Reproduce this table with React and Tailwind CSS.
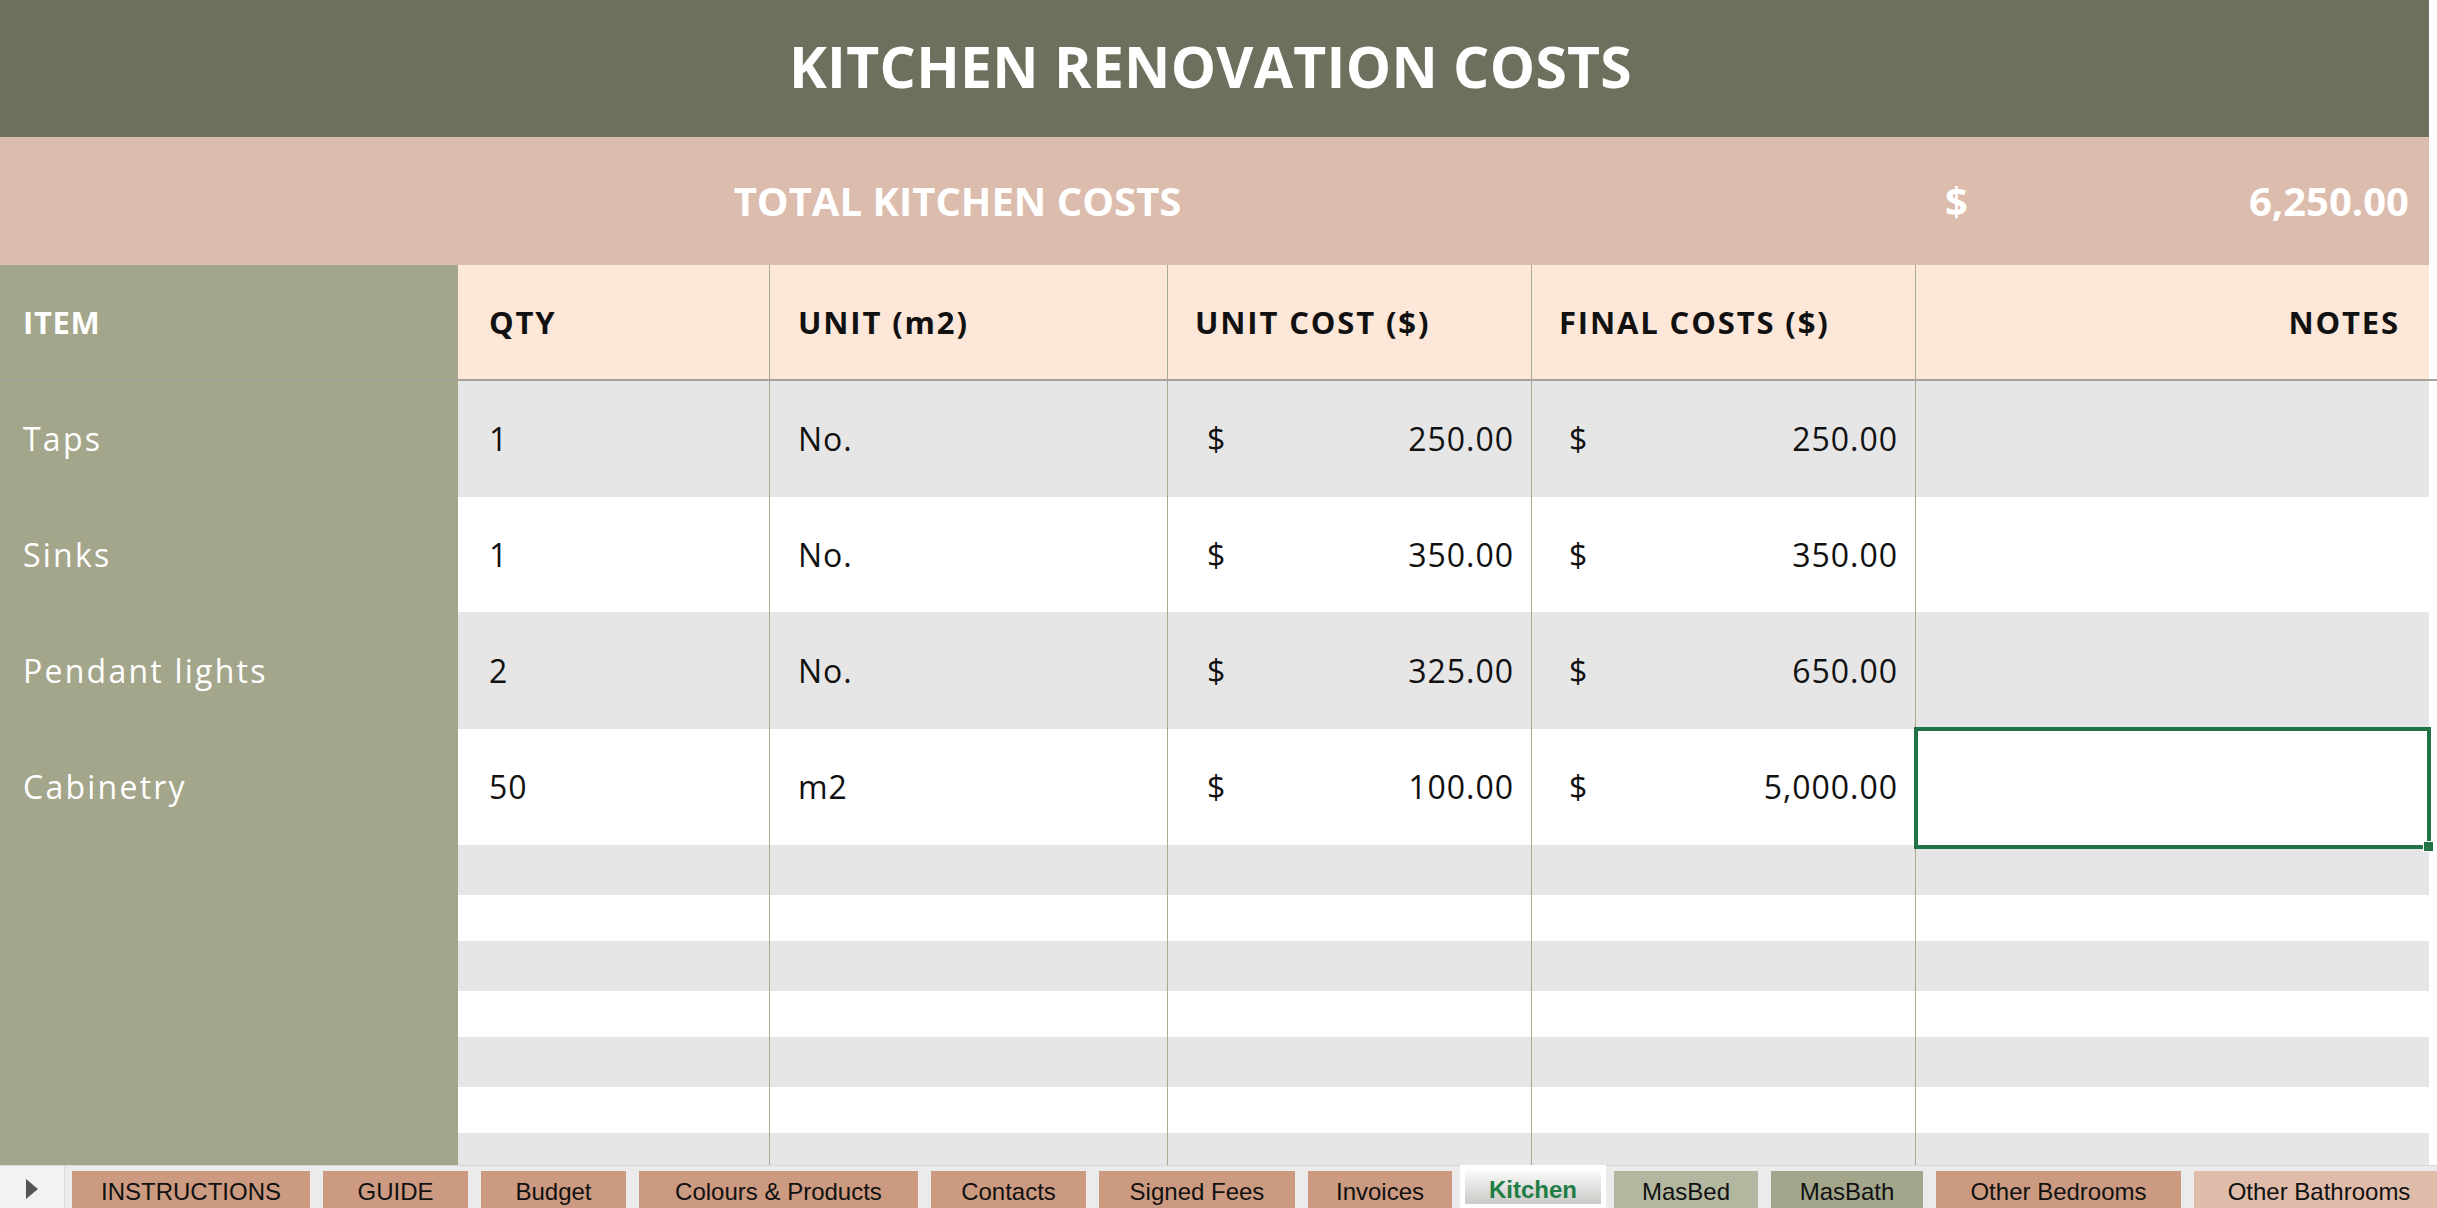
const sans = "font-['Open_Sans',sans-serif]";
const tabFont = "font-['Liberation_Sans',Arial,sans-serif]";

const dataRows = [
  { h: 'h-[116px]', bg: 'bg-[#e7e6e7]', item: 'Taps', qty: '1', unit: 'No.', cost: '250.00', fin: '250.00' },
  { h: 'h-[115px]', bg: 'bg-white', item: 'Sinks', qty: '1', unit: 'No.', cost: '350.00', fin: '350.00' },
  { h: 'h-[117px]', bg: 'bg-[#e7e6e7]', item: 'Pendant lights', qty: '2', unit: 'No.', cost: '325.00', fin: '650.00' },
  { h: 'h-[116px]', bg: 'bg-white', item: 'Cabinetry', qty: '50', unit: 'm2', cost: '100.00', fin: '5,000.00', selected: true },
];

const emptyRows = [
  { h: 'h-[50px]', bg: 'bg-[#e7e6e7]' },
  { h: 'h-[46px]', bg: 'bg-white' },
  { h: 'h-[50px]', bg: 'bg-[#e7e6e7]' },
  { h: 'h-[46px]', bg: 'bg-white' },
  { h: 'h-[50px]', bg: 'bg-[#e7e6e7]' },
  { h: 'h-[46px]', bg: 'bg-white' },
  { h: 'h-[32px]', bg: 'bg-[#e7e6e7]' },
];

const tabs = [
  { name: 'INSTRUCTIONS', w: 'w-[238px]', bg: 'bg-[#cc9a80]' },
  { name: 'GUIDE', w: 'w-[145px]', bg: 'bg-[#cc9a80]' },
  { name: 'Budget', w: 'w-[145px]', bg: 'bg-[#cc9a80]' },
  { name: 'Colours & Products', w: 'w-[279px]', bg: 'bg-[#cc9a80]' },
  { name: 'Contacts', w: 'w-[155px]', bg: 'bg-[#cc9a80]' },
  { name: 'Signed Fees', w: 'w-[196px]', bg: 'bg-[#cc9a80]' },
  { name: 'Invoices', w: 'w-[144px]', bg: 'bg-[#cc9a80]' },
  { name: 'Kitchen', w: 'w-[146px]', active: true },
  { name: 'MasBed', w: 'w-[144px]', bg: 'bg-[#b4b7a0]' },
  { name: 'MasBath', w: 'w-[152px]', bg: 'bg-[#a3a68b]' },
  { name: 'Other Bedrooms', w: 'w-[245px]', bg: 'bg-[#cc9a80]' },
  { name: 'Other Bathrooms', w: 'w-[250px]', bg: 'bg-[#dfbcaa]' },
];

function DataRow({ r }) {
  return (
    <div className={`flex ${r.h} shrink-0 text-[32px] tracking-[0.03em] text-[#111]`}>
      <div className="w-[458px] shrink-0 bg-[#a4a68b] pl-[23px] flex items-center text-white tracking-[0.07em]">{r.item}</div>
      <div className={`w-[311px] shrink-0 ${r.bg} pl-[31px] flex items-center`}>{r.qty}</div>
      <div className={`w-[398px] shrink-0 ${r.bg} border-l border-[#a8aa92] pl-[28px] flex items-center`}>{r.unit}</div>
      <div className={`w-[364px] shrink-0 ${r.bg} border-l border-[#a8aa92] pl-[39px] pr-[17px] flex items-center justify-between`}>
        <span>$</span>
        <span>{r.cost}</span>
      </div>
      <div className={`w-[384px] shrink-0 ${r.bg} border-l border-[#a8aa92] pl-[37px] pr-[17px] flex items-center justify-between`}>
        <span>$</span>
        <span>{r.fin}</span>
      </div>
      <div className={`w-[514px] shrink-0 ${r.bg} border-l border-[#a8aa92] relative`}>
        {r.selected && (
          <div className="absolute -left-[2px] -top-[2px] -right-[2px] -bottom-[4px] border-[4px] border-[#217346]">
            <div className="absolute -right-[7px] -bottom-[7px] w-[11px] h-[11px] bg-[#217346] border border-white"></div>
          </div>
        )}
      </div>
    </div>
  );
}

function EmptyRow({ r }) {
  return (
    <div className={`flex ${r.h} shrink-0`}>
      <div className="w-[458px] shrink-0 bg-[#a4a68b]"></div>
      <div className={`w-[311px] shrink-0 ${r.bg}`}></div>
      <div className={`w-[398px] shrink-0 ${r.bg} border-l border-[#a8aa92]`}></div>
      <div className={`w-[364px] shrink-0 ${r.bg} border-l border-[#a8aa92]`}></div>
      <div className={`w-[384px] shrink-0 ${r.bg} border-l border-[#a8aa92]`}></div>
      <div className={`w-[514px] shrink-0 ${r.bg} border-l border-[#a8aa92]`}></div>
    </div>
  );
}

export default function App() {
  return (
    <div className={`w-[2437px] h-[1208px] overflow-hidden bg-white flex flex-col ${sans}`}>
      {/* Title */}
      <div className="w-[2429px] h-[137px] shrink-0 bg-[#6b715c] flex items-center justify-center pb-[4px]">
        <h1 className="text-white font-bold text-[57px] leading-none tracking-[0.005em] pr-[8px]">KITCHEN RENOVATION COSTS</h1>
      </div>
      {/* Total */}
      <div className="w-[2429px] h-[128px] shrink-0 bg-[#dcbcad] flex items-center text-white font-bold text-[40px]">
        <div className="w-[1915px] flex justify-center">TOTAL KITCHEN COSTS</div>
        <div className="w-[514px] flex justify-between pl-[30px] pr-[20px]">
          <span>$</span>
          <span>6,250.00</span>
        </div>
      </div>
      {/* Table */}
      <div className="flex-1 flex flex-col overflow-hidden">
        <div className="flex h-[116px] shrink-0 border-b-2 border-[#a3a39c] font-bold text-[31px] tracking-[0.06em] text-[#111]">
          <div className="w-[458px] shrink-0 bg-[#a4a68b] pl-[23px] flex items-center text-white tracking-[0.02em]">ITEM</div>
          <div className="w-[311px] shrink-0 bg-[#fde7d8] pl-[31px] flex items-center">QTY</div>
          <div className="w-[398px] shrink-0 bg-[#fde7d8] border-l border-[#a8aa92] pl-[28px] flex items-center">UNIT (m2)</div>
          <div className="w-[364px] shrink-0 bg-[#fde7d8] border-l border-[#a8aa92] pl-[27px] flex items-center">UNIT COST ($)</div>
          <div className="w-[384px] shrink-0 bg-[#fde7d8] border-l border-[#a8aa92] pl-[27px] flex items-center">FINAL COSTS ($)</div>
          <div className="w-[514px] shrink-0 bg-[#fde7d8] border-l border-[#a8aa92] pr-[29px] flex items-center justify-end">NOTES</div>
        </div>
        {dataRows.map((r, i) => (
          <DataRow key={i} r={r} />
        ))}
        {emptyRows.map((r, i) => (
          <EmptyRow key={i} r={r} />
        ))}
      </div>
      {/* Sheet tabs */}
      <div className={`h-[43px] shrink-0 flex bg-[#ebebeb] border-t border-[#d6d6d6] ${tabFont}`}>
        <div className="w-[65px] shrink-0 bg-[#f2f2f2] border-r border-[#d9d9d9] flex items-center justify-center pt-[4px]">
          <svg width="16" height="22" viewBox="0 0 16 22">
            <path d="M2 1 L14 11 L2 21 Z" fill="#555" />
          </svg>
        </div>
        <div className="flex gap-[13px] pl-[7px]">
          {tabs.map((t) =>
            t.active ? (
              <div key={t.name} className={`${t.w} shrink-0 -mx-[5px] px-[5px] bg-white flex flex-col pt-[5px] -mt-px`}>
                <div className="h-[34px] bg-gradient-to-b from-[#fbfbfb] to-[#c9cac6] flex justify-center pt-[8px] leading-none text-[24px] font-bold text-[#1f7d45]">
                  {t.name}
                </div>
              </div>
            ) : (
              <div key={t.name} className={`${t.w} shrink-0 mt-[5px] ${t.bg} flex justify-center pt-[9px] leading-none text-[24px] text-[#111] whitespace-nowrap`}>
                {t.name}
              </div>
            )
          )}
        </div>
      </div>
    </div>
  );
}
